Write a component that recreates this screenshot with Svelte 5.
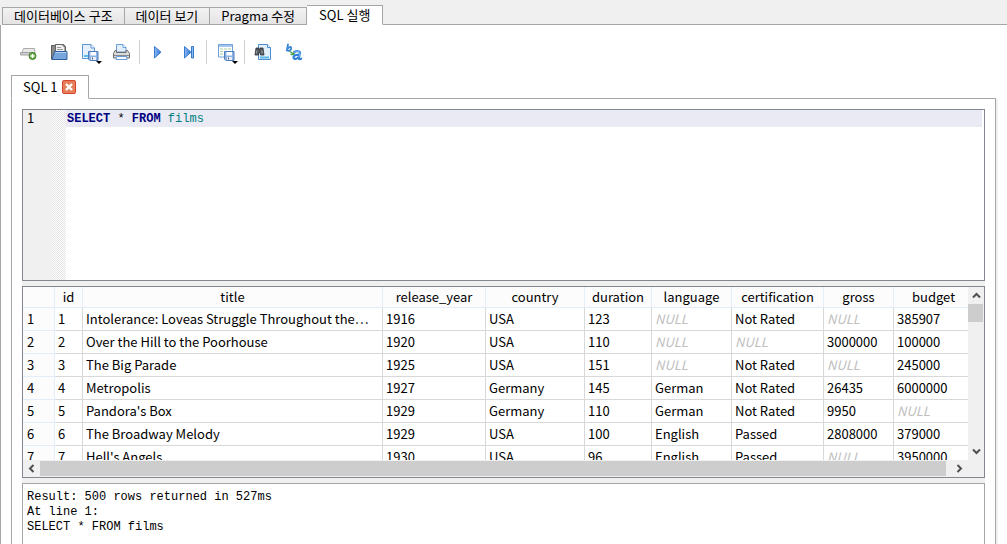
<script lang="ts">
  type Film = {
    id: number;
    title: string;
    values: (string | number | null)[];
  };

  const tabs = ['데이터베이스 구조', '데이터 보기', 'Pragma 수정', 'SQL 실행'];
  let activeTab = 3;

  const columns = [
    { name: 'id', width: 28 },
    { name: 'title', width: 300 },
    { name: 'release_year', width: 103 },
    { name: 'country', width: 99 },
    { name: 'duration', width: 67 },
    { name: 'language', width: 80 },
    { name: 'certification', width: 92 },
    { name: 'gross', width: 70 },
    { name: 'budget', width: 80 }
  ];

  const films: Film[] = [
    { id: 1, title: 'Intolerance: Loveas Struggle Throughout the⋯', values: [1916, 'USA', 123, null, 'Not Rated', null, 385907] },
    { id: 2, title: 'Over the Hill to the Poorhouse', values: [1920, 'USA', 110, null, null, 3000000, 100000] },
    { id: 3, title: 'The Big Parade', values: [1925, 'USA', 151, null, 'Not Rated', null, 245000] },
    { id: 4, title: 'Metropolis', values: [1927, 'Germany', 145, 'German', 'Not Rated', 26435, 6000000] },
    { id: 5, title: "Pandora's Box", values: [1929, 'Germany', 110, 'German', 'Not Rated', 9950, null] },
    { id: 6, title: 'The Broadway Melody', values: [1929, 'USA', 100, 'English', 'Passed', 2808000, 379000] },
    { id: 7, title: "Hell's Angels", values: [1930, 'USA', 96, 'English', 'Passed', null, 3950000] }
  ];

  const messages = 'Result: 500 rows returned in 527ms\nAt line 1:\nSELECT * FROM films';

  let viewport: HTMLDivElement;

  function scroll(x: number, y: number) {
    viewport.scrollBy(x, y);
  }
</script>

<div class="window">
  <div class="tabs" role="tablist">
    {#each tabs as tab, i}
      <button class="tab" class:active={activeTab === i} role="tab" aria-selected={activeTab === i} on:click={() => (activeTab = i)}>{tab}</button>
    {/each}
    <div class="tabs-rest"></div>
  </div>

  <div class="pane">
    <div class="toolbar" role="toolbar" aria-label="SQL">
      <button class="tool" aria-label="Open tab">
        <svg width="18" height="18" viewBox="0 0 18 18">
          <path d="M3.500 5.500h11l.500 5H1.500z" fill="#e8e8e8" stroke="#acacac" />
          <path d="M.500 9.500h14v2.500h-14z" fill="#d0d0d0" stroke="#a2a2a2" />
          <circle cx="12.500" cy="13" r="3.500" fill="#6fae4a" stroke="#447d2c" />
          <path d="M12.500 11v4M10.500 13h4" stroke="#fff" stroke-width="1.400" />
        </svg>
      </button>
      <button class="tool" aria-label="Open SQL file">
        <svg width="18" height="18" viewBox="0 0 18 18">
          <path d="M.500 16.500v-14h4v-1h8l2 2v6" fill="#8a8a8a" stroke="#5d5d5d" />
          <path d="M4.500 10V1.500h6.500l3 3V10z" fill="#f0f0f0" stroke="#666" />
          <path d="M6 4.500h4M6 6.500h6" stroke="#999" />
          <path d="M3.500 8.500h12.500v8H1z" fill="#78a5dc" stroke="#315f9e" />
          <path d="M4.500 9.500h11" stroke="#b4d1f2" />
        </svg>
      </button>
      <button class="tool" aria-label="Save SQL file">
        <svg width="18" height="18" viewBox="0 0 18 18">
          <path d="M.500 1.500h8.500l3.500 3.500v10.500H.500z" fill="#e4f0fc" stroke="#5c94d6" />
          <path d="M9 1.500V5h3.500" fill="#fff" stroke="#5c94d6" />
          <path d="M2 13h5" stroke="#58b9ec" stroke-width="2" />
          <path d="M6.500 8.500h9.500v9H8l-1.500-1.500z" fill="#8fb2e2" stroke="#4c7dbd" />
          <path d="M8.500 9h5.500v3.500H8.500z" fill="#fff" />
          <path d="M9 14h5v3H9z" fill="#e8eef5" />
          <path d="M10.500 14.500v2" stroke="#44658e" />
        </svg>
        <span class="arrow"></span>
      </button>
      <button class="tool" aria-label="Print">
        <svg width="18" height="18" viewBox="0 0 18 18">
          <path d="M3.500 9V1.500h6.500l3 3V9z" fill="#e3effc" stroke="#6a9ddb" />
          <path d="M10 1.500v3h3" fill="#fff" stroke="#6a9ddb" />
          <path d="M2 7.500h1.500v2h9.500v-2h1.500l2 3v4.500H.500v-4.500z" fill="#dadada" stroke="#6c6c6c" />
          <path d="M1 12.500h15" stroke="#8a8a8a" />
          <path d="M3.500 13.500h10l.500 3H3z" fill="#f8fbff" stroke="#6a9ddb" />
        </svg>
      </button>
      <span class="separator"></span>
      <button class="tool" aria-label="Execute SQL">
        <svg width="18" height="18" viewBox="0 0 18 18">
          <defs>
            <linearGradient id="play" x1="0" x2="1">
              <stop offset="0" stop-color="#8cbcf2" />
              <stop offset="1" stop-color="#2c6fd0" />
            </linearGradient>
          </defs>
          <path d="M5.500 3.500v11.500l6.500-5.800z" fill="url(#play)" stroke="#3a7bd0" />
        </svg>
      </button>
      <button class="tool" aria-label="Execute current line">
        <svg width="18" height="18" viewBox="0 0 18 18">
          <path d="M4.500 3.500v11.500l6.500-5.800z" fill="url(#play)" stroke="#3a7bd0" />
          <path d="M11.500 3.500h2v11.500h-2z" fill="#8dbcf0" stroke="#3577c8" />
        </svg>
      </button>
      <span class="separator"></span>
      <button class="tool menu" aria-label="Save results">
        <svg width="18" height="18" viewBox="0 0 18 18">
          <path d="M1.500 1.500h14v12.500h-14z" fill="#fff" stroke="#6e9fd8" />
          <path d="M2 3h13" stroke="#a5c6ee" stroke-width="2" />
          <path d="M3 6h11M3 8.500h11M3 11h11" stroke="#a9cf9a" stroke-dasharray="3 1" />
          <path d="M7.500 8.500h9.500v9H9l-1.500-1.500z" fill="#8fb2e2" stroke="#4c7dbd" />
          <path d="M9.500 9h5.500v3.500H9.500z" fill="#fff" />
          <path d="M10 14h5v3h-5z" fill="#e8eef5" />
          <path d="M11.500 14.500v2" stroke="#44658e" />
        </svg>
        <span class="arrow"></span>
      </button>
      <span class="separator"></span>
      <button class="tool" aria-label="Find">
        <svg width="18" height="18" viewBox="0 0 18 18">
          <path d="M4.500 1.500h9l3 3v12h-12z" fill="#e1effd" stroke="#4d8bd3" />
          <path d="M13.500 1.500v3h3" fill="#fff" stroke="#4d8bd3" />
          <path d="M6 14.500h9" stroke="#58b9ec" stroke-width="2" />
          <path d="M2 5h3v2h1V5h3l1 7H6.500v-2h-2v2H1z" fill="#51565d" stroke="#30343a" stroke-width=".8" />
          <path d="M2.800 7.500v3M8 7.500v3" stroke="#a4abb3" />
        </svg>
      </button>
      <button class="tool" aria-label="Find and replace">
        <svg width="18" height="18" viewBox="0 0 18 18" fill="none" stroke-linecap="round">
          <path d="M3 1.500L1.800 7.500c2.500 1 5-.800 4.400-2.800C5.800 3.500 4 4 3 5.500" stroke="#3b86d6" stroke-width="1.800" />
          <path d="M5 8.500l4 3M9 8.500v3H6" stroke="#51a351" stroke-width="1.400" />
          <path d="M9.500 9c2-1.200 5.500-1 5.500.600l-1.200 5.600c0 1.200 1.400 1.200 2.400.500M14.200 11.800c-4.500-.300-6.300 1.600-5.500 3.400 1 1.600 4.300.400 5.300-1.800" stroke="#2f80d8" stroke-width="2.200" />
          <path d="M9.500 9c2-1.200 5.500-1 5.500.600l-1 4.500" stroke="#8cc2f6" stroke-width=".8" />
        </svg>
      </button>
    </div>

    <div class="sub-tabs">
      <div class="sub-tab">
        <span>SQL 1</span>
        <button class="close" aria-label="Close SQL 1">
          <svg width="14" height="14" viewBox="0 0 14 14">
            <rect x=".5" y=".5" width="13" height="13" rx="1.500" fill="#e4815c" stroke="#d9432b" />
            <path d="M4 4l6 6M10 4l-6 6" stroke="#fff" stroke-width="2.400" />
          </svg>
        </button>
      </div>
      <div class="sub-rest"></div>
    </div>

    <div class="sub-pane">
      <div class="editor">
        <div class="line-numbers">1</div>
        <div class="fold"></div>
        <div class="code" role="textbox" aria-label="SQL" aria-multiline="true" tabindex="0" contenteditable="true" spellcheck="false"><div class="line"><b>SELECT</b> * <b>FROM</b> <i>films</i></div></div>
      </div>

      <div class="results">
        <div class="viewport" bind:this={viewport}>
          <table>
            <colgroup>
              <col style="width: 32px" />
              {#each columns as column}
                <col style="width: {column.width}px" />
              {/each}
            </colgroup>
            <thead>
              <tr>
                <th></th>
                {#each columns as column}
                  <th scope="col">{column.name}</th>
                {/each}
              </tr>
            </thead>
            <tbody>
              {#each films as film, i (film.id)}
                <tr>
                  <th scope="row">{i + 1}</th>
                  <td>{film.id}</td>
                  <td>{film.title}</td>
                  {#each film.values as value}
                    <td class:null={value === null}>{value ?? 'NULL'}</td>
                  {/each}
                </tr>
              {/each}
            </tbody>
          </table>
        </div>
        <div class="scrollbar vertical">
          <button aria-label="Scroll up" on:click={() => scroll(0, -23)}>
            <svg width="9" height="7" viewBox="0 0 9 7"><path d="M1 5.500L4.500 2 8 5.500" /></svg>
          </button>
          <div class="thumb"></div>
          <div class="track"></div>
          <button aria-label="Scroll down" on:click={() => scroll(0, 23)}>
            <svg width="9" height="7" viewBox="0 0 9 7"><path d="M1 1.500L4.500 5 8 1.500" /></svg>
          </button>
        </div>
        <div class="scrollbar horizontal">
          <button aria-label="Scroll left" on:click={() => scroll(-40, 0)}>
            <svg width="7" height="9" viewBox="0 0 7 9"><path d="M5.500 1L2 4.500 5.500 8" /></svg>
          </button>
          <div class="thumb"></div>
          <div class="track"></div>
          <button aria-label="Scroll right" on:click={() => scroll(40, 0)}>
            <svg width="7" height="9" viewBox="0 0 7 9"><path d="M1.500 1L5 4.500 1.500 8" /></svg>
          </button>
        </div>
        <div class="corner"></div>
      </div>

      <textarea class="messages" aria-label="Messages" readonly value={messages}></textarea>
    </div>
  </div>
</div>

<style>
:global(body) {
  background: #f0f0f0;
}
.window {
  display: flex;
  flex-direction: column;
  height: 100vh;
  overflow: hidden;
  color: #000;
  font: 13px/18px "Noto Sans CJK KR", sans-serif;
}
.window * {
  box-sizing: border-box;
}
button {
  margin: 0;
  padding: 0;
  border: 0;
  background: none;
  color: inherit;
  font: inherit;
}
svg {
  display: block;
}

/* main tabs */
.tabs {
  display: flex;
  align-items: flex-end;
  flex: none;
  height: 25px;
  padding-left: 2px;
}
.tab {
  height: 18px;
  padding: 0 11px;
  line-height: 14px;
  white-space: nowrap;
  border: 1px solid #a6a6a6;
  border-left-width: 0;
  background: linear-gradient(#f2f2f2, #e4e4e4);
}
.tab:first-child {
  border-left-width: 1px;
}
.tab.active {
  height: 20px;
  padding: 0 12px;
  line-height: 16px;
  border-bottom-color: #fff;
  background: #fff;
}
.tabs-rest {
  flex: 1;
  height: 1px;
  background: #a6a6a6;
}
.pane {
  display: flex;
  flex-direction: column;
  flex: 1;
  min-height: 0;
  padding: 0 11px 0 10px;
  border-left: 1px solid #a6a6a6;
  background: #fff;
}

/* toolbar */
.toolbar {
  display: flex;
  align-items: center;
  flex: none;
  height: 50px;
  padding: 4px 2px 0;
}
.tool {
  position: relative;
  display: flex;
  align-items: center;
  justify-content: center;
  width: 31px;
  height: 30px;
}
.tool.menu {
  width: 33px;
}
.arrow {
  position: absolute;
  right: 4px;
  bottom: 3px;
  border: 3px solid transparent;
  border-top-color: #000;
  border-bottom: 0;
}
.separator {
  width: 1px;
  height: 24px;
  margin: 0 2px;
  background: #d0d0d0;
}

/* query tabs */
.sub-tabs {
  display: flex;
  align-items: flex-end;
  flex: none;
}
.sub-tab {
  display: flex;
  align-items: center;
  gap: 4px;
  height: 24px;
  padding: 0 12px 0 11px;
  border: 1px solid #a6a6a6;
  border-bottom-color: #fff;
}
.sub-rest {
  flex: 1;
  height: 1px;
  background: #a6a6a6;
}
.sub-pane {
  display: flex;
  flex-direction: column;
  flex: 1;
  min-height: 0;
  padding: 10px 10px 0;
  border: 1px solid #a6a6a6;
  border-width: 0 1px;
  box-shadow: 2px 0 #f0f0f0;
}

/* editor */
.editor {
  display: flex;
  flex: none;
  height: 172px;
  border: 1px solid #828790;
}
.line-numbers {
  width: 28px;
  padding-left: 4px;
  line-height: 16px;
  background: #f0f0f0;
}
.fold {
  width: 15px;
  background: repeating-conic-gradient(#e4e4e4 0 25%, #fff 0 50%) 0 0 / 2px 2px;
}
.code {
  flex: 1;
  padding-right: 2px;
  outline: none;
  font: 12px/16px "Liberation Mono", monospace;
}
.line {
  padding: 1px 0 0 1px;
  background: #eaeaf4;
  white-space: pre;
}
.line b {
  color: #000080;
}
.line i {
  color: #008080;
  font-style: normal;
}

/* results */
.results {
  display: grid;
  grid-template-columns: minmax(0, 1fr) 16px;
  grid-template-rows: 173px 17px;
  flex: none;
  margin: 5px 0;
  border: 1px solid #828790;
  box-shadow: 0 -5px #f0f0f0, 0 5px #f0f0f0;
}
.viewport {
  overflow: hidden;
  background: #fff;
}
table {
  width: 951px;
  table-layout: fixed;
  border-spacing: 0;
}
th,
td {
  height: 23px;
  padding: 0 3px;
  line-height: 22px;
  font-weight: normal;
  text-align: left;
  white-space: nowrap;
  border: solid #d8d8d8;
  border-width: 0 1px 1px 0;
}
td {
  overflow: hidden;
  text-overflow: ellipsis;
}
th {
  background: #fcfcfc;
  border-color: #e4eefa;
}
thead th {
  height: 21px;
  line-height: 20px;
  text-align: center;
}
tbody th {
  padding-left: 4px;
}
.null {
  color: #c0c0c0;
  font-style: italic;
}
.scrollbar {
  display: flex;
  background: #f0f0f0;
}
.scrollbar button {
  display: flex;
  align-items: center;
  justify-content: center;
  width: 17px;
  height: 17px;
}
.scrollbar path {
  fill: none;
  stroke: #505050;
  stroke-width: 2;
}
.vertical {
  flex-direction: column;
}
.vertical button {
  width: 16px;
}
.vertical .thumb {
  height: 18px;
  margin-right: 1px;
}
.vertical .track {
  flex: 1;
}
.horizontal .thumb {
  flex: 1;
  margin: 1px 0;
}
.horizontal .track {
  width: 5px;
}
.thumb {
  background: #cdcdcd;
}
.corner {
  background: #f0f0f0;
}

/* messages */
.messages {
  display: block;
  flex: 1;
  width: 100%;
  min-height: 80px;
  margin: 0;
  padding: 6px 4px 0;
  border: 1px solid #a6a6a6;
  border-bottom: 0;
  outline: none;
  resize: none;
  background: #fff;
  color: #000;
  font: 12px/15px "Liberation Mono", monospace;
}
</style>
